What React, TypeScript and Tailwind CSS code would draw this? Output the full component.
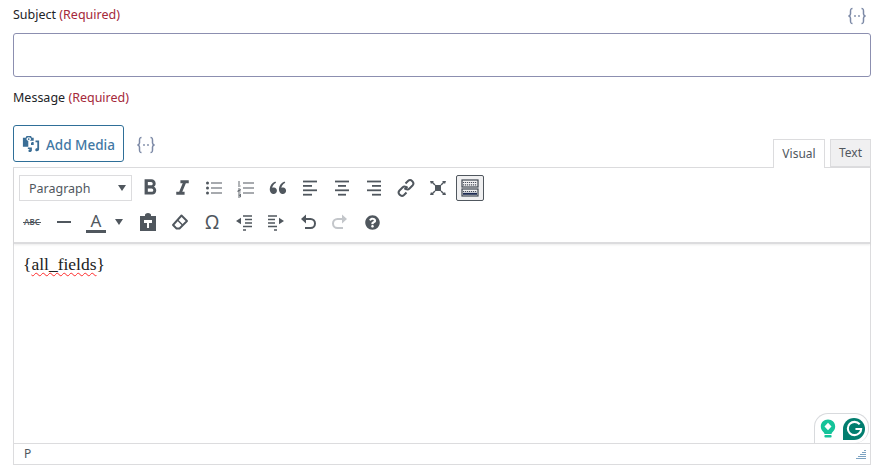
import type { ReactNode } from "react";
import { MdFormatBold, MdFormatItalic } from "react-icons/md";
import { RiDoubleQuotesL } from "react-icons/ri";
import { FaQuestionCircle } from "react-icons/fa";

const ui = "font-['Noto_Sans','Open_Sans',sans-serif]";

function Glyph({ children, muted }: { children: ReactNode; muted?: boolean }) {
  return (
    <svg
      viewBox="0 0 20 20"
      className={`w-5 h-5 ${muted ? "text-[#c3c6ca]" : "text-[#50575e]"}`}
      fill="none"
      stroke="currentColor"
      strokeWidth="2"
    >
      {children}
    </svg>
  );
}

function Btn({ children, active }: { children: ReactNode; active?: boolean }) {
  return (
    <div className="w-8 h-[26px] shrink-0 flex items-center justify-center">
      {active ? (
        <div className="w-7 h-[26px] flex items-center justify-center rounded-[2px] border border-[#50575e] bg-[#f0f0f1]">
          {children}
        </div>
      ) : (
        children
      )}
    </div>
  );
}

function MergeTag() {
  return (
    <svg viewBox="0 0 20 18" className="w-5 h-[18px] text-[#7c89a6]" fill="none" stroke="currentColor" strokeWidth="1.5">
      <path d="M5.5 1.5C3.5 1.5 3.5 2.5 3.5 4.5V7C3.5 8 2.8 8.8 1.5 9C2.8 9.2 3.5 10 3.5 11V13.5C3.5 15.5 3.5 16.5 5.5 16.5" />
      <path d="M14.5 1.5C16.5 1.5 16.5 2.5 16.5 4.5V7C16.5 8 17.2 8.8 18.5 9C17.2 9.2 16.5 10 16.5 11V13.5C16.5 15.5 16.5 16.5 14.5 16.5" />
      <circle cx="8" cy="9" r="0.9" fill="currentColor" stroke="none" />
      <circle cx="12" cy="9" r="0.9" fill="currentColor" stroke="none" />
    </svg>
  );
}

function Required() {
  return <span className="text-[#a5283a] font-normal"> (Required)</span>;
}

function Lines({ rows }: { rows: [number, number][] }) {
  return (
    <Glyph>
      {rows.map(([a, b], i) => (
        <path key={i} d={`M${a} ${3.5 + i * 4.4}H${b}`} strokeWidth="1.8" />
      ))}
    </Glyph>
  );
}

function Toolbar() {
  return (
    <div className="bg-white border-b-2 border-[#dcdcde] pl-[2px] h-[76px] pt-[7px] shadow-[0_1px_2px_rgba(0,0,0,0.08)]">
      <div className="flex items-center h-[26px]">
        <div className="ml-[3px] mr-[2px] w-[113px] h-[26px] border border-[#dcdcde] flex items-center justify-between pl-[9px] pr-[4px] text-[12.5px] text-[#50575e]">
          <span className="pt-[2px]">Paragraph</span>
          <span className="w-0 h-0 border-x-[4.5px] border-x-transparent border-t-[6px] border-t-[#50575e] mr-[1px]" />
        </div>
        <Btn>
          <MdFormatBold className="w-[26px] h-[26px] text-[#50575e]" />
        </Btn>
        <Btn>
          <MdFormatItalic className="w-[25px] h-[25px] text-[#50575e]" />
        </Btn>
        <Btn>
          <Glyph>
            <path d="M7 5H18M7 10H18M7 15H18" strokeWidth="1.2" />
            <circle cx="3.5" cy="5" r="1.5" fill="currentColor" stroke="none" />
            <circle cx="3.5" cy="10" r="1.5" fill="currentColor" stroke="none" />
            <circle cx="3.5" cy="15" r="1.5" fill="currentColor" stroke="none" />
          </Glyph>
        </Btn>
        <Btn>
          <Glyph>
            <path d="M7 5H18M7 10H18M7 15H18" strokeWidth="1.2" />
            <path d="M3 3V7M2 8H4.5M2 11H4.2V12.6H2V14H4.6M2 16H4.4V19H2M2.4 17.4H4.2" strokeWidth="0.9" />
          </Glyph>
        </Btn>
        <Btn>
          <RiDoubleQuotesL className="w-[22px] h-[22px] text-[#50575e]" />
        </Btn>
        <Btn>
          <Lines rows={[[3, 17], [3, 12], [3, 17], [3, 12]]} />
        </Btn>
        <Btn>
          <Lines rows={[[3, 17], [6, 14], [3, 17], [6, 14]]} />
        </Btn>
        <Btn>
          <Lines rows={[[3, 17], [8, 17], [3, 17], [8, 17]]} />
        </Btn>
        <Btn>
          <Glyph>
            <path d="M8.5 11.5L11.5 8.5" />
            <path d="M9.5 5.5L12 3C13.2 1.9 15 1.9 16.3 3.2C17.6 4.5 17.6 6.3 16.5 7.5L13.5 10.5C12.4 11.6 10.8 11.6 9.8 10.7" />
            <path d="M10.5 14.5L8 17C6.8 18.1 5 18.1 3.7 16.8C2.4 15.5 2.4 13.7 3.5 12.5L6.5 9.5C7.6 8.4 9.2 8.4 10.2 9.3" />
          </Glyph>
        </Btn>
        <Btn>
          <svg viewBox="0 0 20 20" className="w-5 h-5 text-[#50575e]" fill="currentColor">
            <rect x="7" y="7" width="6" height="6" />
            <path d="M2 3H6L5 4L7.5 6.5L6.5 7.5L4 5L3 6Z" />
            <path d="M18 3H14L15 4L12.5 6.5L13.5 7.5L16 5L17 6Z" />
            <path d="M2 17H6L5 16L7.5 13.5L6.5 12.5L4 15L3 14Z" />
            <path d="M18 17H14L15 16L12.5 13.5L13.5 12.5L16 15L17 14Z" />
          </svg>
        </Btn>
        <Btn active>
          <svg viewBox="0 0 20 20" className="w-5 h-5 text-[#3f4650]" fill="none" stroke="currentColor">
            <rect x="2" y="2" width="16" height="7" strokeWidth="1.2" />
            <rect x="2" y="11" width="16" height="7" strokeWidth="1.2" />
            <path d="M3 4.5H17M3 6.8H17M3 13.5H17" strokeWidth="1.2" strokeDasharray="1.2 0.8" stroke="#4a4f5c" />
            <path d="M3 15.8H17" strokeWidth="2" stroke="#1d2b52" />
          </svg>
        </Btn>
      </div>
      <div className="flex items-center h-[26px] mt-[8px]">
        <Btn>
          <div className="relative text-[8px] leading-none text-[#50575e] font-semibold">
            ABC
            <div className="absolute left-[-1px] right-[-1px] top-[4px] h-px bg-[#50575e]" />
          </div>
        </Btn>
        <Btn>
          <Glyph>
            <path d="M3 10H17" />
          </Glyph>
        </Btn>
        <div className="w-[52px] h-[26px] shrink-0 flex items-center">
          <div className="ml-[6px] w-5 flex flex-col items-center text-[#50575e]">
            <span className="text-[17px] leading-[17px]">A</span>
            <div className="w-5 h-[3px] mt-[1px] bg-[#50575e]" />
          </div>
          <span className="ml-[9px] w-0 h-0 border-x-[4.5px] border-x-transparent border-t-[6px] border-t-[#50575e]" />
        </div>
        <Btn>
          <svg viewBox="0 0 20 20" className="w-5 h-5 text-[#50575e]" fill="currentColor">
            <path fillRule="evenodd" d="M2 4H7V3C7 2 8 1 10 1C12 1 13 2 13 3V4H18V19H2ZM6 8V11H9V16H11V11H14V8Z" />
          </svg>
        </Btn>
        <Btn>
          <Glyph>
            <path d="M11.5 3.5L17 9L9.5 16.5H6.5L3 13Z" strokeWidth="1.9" strokeLinejoin="round" />
            <path d="M7.5 8L12.5 13" strokeWidth="1.4" />
          </Glyph>
        </Btn>
        <Btn>
          <span className="text-[19px] leading-none text-[#50575e]">Ω</span>
        </Btn>
        <Btn>
          <Glyph>
            <path d="M9 4H18M11 7.5H18M11 11H18M9 14.5H18M9 18H12" strokeWidth="1.5" />
            <path d="M2 9L7 5.8V12.2Z" fill="currentColor" stroke="none" />
          </Glyph>
        </Btn>
        <Btn>
          <Glyph>
            <path d="M2 4H11M2 7.5H9M2 11H9M2 14.5H11M8 18H11" strokeWidth="1.5" />
            <path d="M18 9L13 5.8V12.2Z" fill="currentColor" stroke="none" />
          </Glyph>
        </Btn>
        <Btn>
          <Glyph>
            <path d="M7 7H12.5C15 7 17 9 17 11.5C17 14 15 16 12.5 16H7" />
            <path d="M8 2.5L3 7L8 11.5Z" fill="currentColor" stroke="none" />
          </Glyph>
        </Btn>
        <Btn>
          <Glyph muted>
            <path d="M13 7H7.5C5 7 3 9 3 11.5C3 14 5 16 7.5 16H13" />
            <path d="M12 2.5L17 7L12 11.5Z" fill="currentColor" stroke="none" />
          </Glyph>
        </Btn>
        <Btn>
          <FaQuestionCircle className="w-[15px] h-[15px] text-[#50575e]" />
        </Btn>
      </div>
    </div>
  );
}

function GrammarlyBadge() {
  return (
    <div className="absolute right-[1px] bottom-0 w-[55px] h-[30px] bg-white border border-b-0 border-[#d8dadd] rounded-t-[14px] rounded-br-[14px] flex items-center justify-between pl-[5px] pr-[3px]">
      <svg viewBox="0 0 16 20" className="w-[16px] h-[20px]">
        <path d="M8 0.5C3.8 0.5 0.8 3.6 0.8 7.5C0.8 10 2 11.8 3.6 13.2C4.2 13.8 4.4 14.3 4.4 15H11.6C11.6 14.3 11.8 13.8 12.4 13.2C14 11.8 15.2 10 15.2 7.5C15.2 3.6 12.2 0.5 8 0.5Z" fill="#15c39a" />
        <path d="M8 3.8L11.5 7.5L8 11.2L4.5 7.5Z" fill="#fff" />
        <rect x="4.4" y="16" width="7.2" height="2.6" rx="1" fill="#15c39a" />
      </svg>
      <div className="w-[22px] h-[22px] rounded-full rounded-bl-none bg-[#027e6f] flex items-center justify-center">
        <svg viewBox="0 0 20 20" className="w-[19px] h-[19px]" fill="none" stroke="#fff" strokeWidth="2.2">
          <path d="M15.5 5.5C14.2 4 12.3 3 10 3C6.2 3 3 6.1 3 10C3 13.9 6.2 17 10 17C13.8 17 17 14 17 10.5H11" />
        </svg>
      </div>
    </div>
  );
}

export default function App() {
  return (
    <div className={`${ui} w-[879px] h-[472px] bg-white overflow-hidden pl-[13px] pr-2 text-[12.5px] text-[#1d2327]`}>
      <div className="flex items-center justify-between h-[33px] pb-[3px] pt-px">
        <span>
          Subject
          <Required />
        </span>
        <div className="mr-1">
          <MergeTag />
        </div>
      </div>
      <div className="h-11 border border-[#8c8fb0] rounded-[3px] bg-white" />
      <div className="h-[40px] pt-[12px] leading-[18px]">
        Message
        <Required />
      </div>
      <div className="h-[7px]" />
      <div className="flex items-end h-[43px]">
        <div className="flex items-center w-[111px] h-[37px] mb-[5px] border border-[#2f6f98] rounded-[3px] pl-2 text-[#4278a4] text-[13.5px] font-medium">
          <svg viewBox="0 0 20 20" className="w-[18px] h-[18px] mr-[6px] text-[#3b6e96]" fill="currentColor">
            <path fillRule="evenodd" d="M1 3H4L5 1H10L11 3H13V11H10V9.5C10 8 11.5 7.5 13 8V6.5H7.5C9 6.5 10 5.5 10 4.5C10 3.5 9 2.5 7.5 2.5C6 2.5 5 3.5 5 4.5C5 5.5 6 6.5 7.5 6.5H7V13H1ZM7.5 3.5A1 1 0 1 1 7.4 5.5A1 1 0 0 1 7.5 3.5Z" />
            <path d="M15 6H19V15.5C19 17 17.8 18 16.5 18C15.2 18 14.5 17 14.8 16C15 15 16 14.5 17 14.7V8H15Z" />
            <path d="M6.5 14H11V17C11 18.2 10 19 8.8 19C7.6 19 7 18.2 7.2 17.2C7.4 16.3 8.2 15.8 9 16V15.5H6.5Z" />
          </svg>
          <span className="pt-[3px]">Add Media</span>
        </div>
        <div className="ml-3 mb-[13px]">
          <MergeTag />
        </div>
        <div className="flex-1" />
        <div className="w-[52px] h-[29px] border border-b-0 border-[#dcdcde] bg-white flex items-center justify-center text-xs text-[#50575e] -mb-px relative z-10">
          Visual
        </div>
        <div className="ml-[5px] w-[41px] h-[28px] border border-[#dcdcde] bg-[#f0f0f1] flex items-center justify-center text-xs text-[#50575e]">
          Text
        </div>
      </div>
      <div className="relative border border-[#dcdcde] h-[298px] flex flex-col">
        <Toolbar />
        <div className="flex-1 relative pl-[9px] pt-[8px] font-['Liberation_Serif',serif] text-[17.5px] leading-[24px] text-[#222]">
          {"{"}
          <span className="underline decoration-wavy decoration-[#ff2a2a] decoration-[1.2px] underline-offset-2">all_fields</span>
          {"}"}
          <GrammarlyBadge />
        </div>
        <div className="h-[21px] border-t border-[#dcdcde] flex items-center justify-between pl-[10px] pr-[3px] text-xs text-[#50575e]">
          <span>P</span>
          <svg viewBox="0 0 12 11" className="w-3 h-[11px] text-[#7da3c2]" fill="none" stroke="currentColor">
            <path d="M9 1.5H11M7 3.5H11M5 5.5H11M3 7.5H11M1 9.5H11" />
          </svg>
        </div>
      </div>
    </div>
  );
}
